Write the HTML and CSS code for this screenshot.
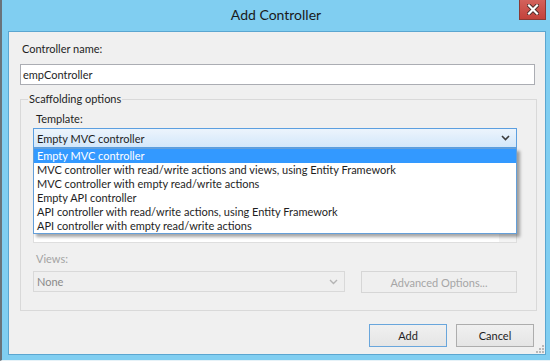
FILE: index.html
```html
<!DOCTYPE html>
<html lang="en">
<head>
    <meta charset="UTF-8">
    <title>Add Controller</title>
    <link rel="stylesheet" href="styles.css">
</head>
<body>

    <div class="window">
        <!-- Title bar -->
        <div class="titlebar">
            <span></span>
            <span class="title">Add Controller</span>
            <div class="controls">
                <button class="close-btn" type="button" aria-label="Close">
                    <svg width="12" height="11" viewBox="0 0 12 11">
                        <path d="M2 1.5 L10 9.5 M10 1.5 L2 9.5" stroke="#4a2a28" stroke-width="4" stroke-linecap="square"/>
                        <path d="M2 1.5 L10 9.5 M10 1.5 L2 9.5" stroke="#ffffff" stroke-width="2.2" stroke-linecap="square"/>
                    </svg>
                </button>
            </div>
        </div>

        <!-- Dialog body -->
        <div class="client">
            <label class="field-label name-label" for="controllerName">Controller name:</label>
            <input id="controllerName" class="text-input" type="text" value="empController">

            <fieldset class="group">
                <legend>Scaffolding options</legend>

                <label class="field-label">Template:</label>
                <div class="template-wrap">
                    <div class="combo combo-open">
                        <span>Empty MVC controller</span>
                        <svg class="chevron" width="9" height="6" viewBox="0 0 9 6">
                            <polyline points="1,1 4.5,4.5 8,1" fill="none" stroke="#3c3c3c" stroke-width="1.6"/>
                        </svg>
                    </div>
                    <div class="template-info">
                        <div class="info-scroll">
                            <svg width="7" height="4" viewBox="0 0 7 4">
                                <polyline points="1,0.5 3.5,3 6,0.5" fill="none" stroke="#9a9a9a" stroke-width="1"/>
                            </svg>
                        </div>
                    </div>

                    <!-- Open drop-down list -->
                    <ul class="dropdown">
                        <li class="selected">Empty MVC controller</li>
                        <li>MVC controller with read/write actions and views, using Entity Framework</li>
                        <li>MVC controller with empty read/write actions</li>
                        <li>Empty API controller</li>
                        <li>API controller with read/write actions, using Entity Framework</li>
                        <li>API controller with empty read/write actions</li>
                    </ul>
                </div>

                <label class="field-label disabled">Views:</label>
                <div class="views-row">
                    <div class="combo combo-disabled">
                        <span>None</span>
                        <svg class="chevron" width="9" height="6" viewBox="0 0 9 6">
                            <polyline points="1,1 4.5,4.5 8,1" fill="none" stroke="#b4b4b4" stroke-width="1.4"/>
                        </svg>
                    </div>
                    <button class="btn btn-disabled" type="button">Advanced Options...</button>
                </div>
            </fieldset>

            <div class="actions">
                <button class="btn btn-default" type="button">Add</button>
                <button class="btn" type="button">Cancel</button>
            </div>

            <svg class="grip" width="8" height="8" viewBox="0 0 8 8">
                <rect x="6" y="0" width="2" height="2" fill="#b8b8b8"/>
                <rect x="3" y="3" width="2" height="2" fill="#b8b8b8"/>
                <rect x="6" y="3" width="2" height="2" fill="#b8b8b8"/>
                <rect x="0" y="6" width="2" height="2" fill="#b8b8b8"/>
                <rect x="3" y="6" width="2" height="2" fill="#b8b8b8"/>
                <rect x="6" y="6" width="2" height="2" fill="#b8b8b8"/>
            </svg>
        </div>
    </div>

</body>
</html>
```

FILE: styles.css
```css
/* Basic resets */
* {
    margin: 0;
    padding: 0;
    box-sizing: border-box;
}

body {
    width: 550px;
    height: 361px;
    overflow: hidden;
    font-family: Lato, "Noto Sans", sans-serif;
    font-size: 11px;
    color: #1e1e1e;
    background-color: #80cef1;
}

/* Window frame */
.window {
    display: flex;
    flex-direction: column;
    height: 361px;
    background-color: #80cef1;
    border-left: 2px solid #6a737a;
    border-bottom: 1px solid #e6f2f8;
    padding-bottom: 5px;
}

.titlebar {
    height: 31px;
    display: grid;
    grid-template-columns: 1fr auto 1fr;
    padding: 0 4px 0 4px;
}

.title {
    font-size: 14px;
    line-height: 30px;
    color: #1a1a1a;
}

.controls {
    justify-self: end;
    align-self: start;
}

.close-btn {
    width: 27px;
    height: 20px;
    display: flex;
    align-items: center;
    justify-content: center;
    background: linear-gradient(#d3625c, #c3423b);
    border: 1px solid #8a3a35;
    border-top: none;
}

/* Dialog body */
.client {
    position: relative;
    flex: 1;
    margin: 0 4px 0 6px;
    border: 1px solid #5ba6d0;
    background-color: #f0f0f0;
    padding: 0 9px 0 11px;
}

.field-label {
    display: block;
    line-height: 16px;
    padding-left: 3px;
}

.name-label {
    margin-top: 9px;
    padding-left: 2px;
}

.text-input {
    display: block;
    width: calc(100% - 1px);
    height: 21px;
    margin-top: 7px;
    padding: 0 2px;
    border: 1px solid #abadb3;
    background-color: #fff;
    font: inherit;
    color: #1e1e1e;
    outline: none;
}

/* Scaffolding options group */
.group {
    margin-top: 6px;
    border: 1px solid #d9d9d9;
    padding: 0 19px 17px 12px;
}

.group legend {
    line-height: 16px;
    margin-left: -5px;
    padding: 0 1px;
}

.group .field-label {
    margin-top: 4px;
}

.group .field-label.disabled {
    margin-top: 8px;
    color: #a3a3a3;
}

.template-wrap {
    position: relative;
    margin-top: 1px;
}

.combo {
    display: flex;
    align-items: center;
    justify-content: space-between;
    padding: 0 6px 0 3px;
}

.combo-open {
    height: 20px;
    border: 1px solid #5c9fe0;
    background: linear-gradient(#ecf4fc, #d3e7fa);
}

.template-info {
    height: 95px;
    display: flex;
    justify-content: flex-end;
    align-items: flex-end;
    background-color: #fff;
    border: 1px solid #dedede;
    border-top: none;
}

.info-scroll {
    width: 17px;
    height: 20px;
    display: flex;
    justify-content: center;
    align-items: flex-start;
    padding-top: 2px;
    background-color: #f4f4f4;
}

.dropdown {
    position: absolute;
    top: 20px;
    left: 0;
    right: 0;
    list-style: none;
    background-color: #fff;
    border: 1px solid #649fd9;
    box-shadow: 3px 3px 3px rgba(0, 0, 0, 0.35);
}

.dropdown li {
    line-height: 14px;
    height: 14px;
    padding-left: 3px;
    white-space: nowrap;
}

.dropdown li.selected {
    background-color: #3399ff;
    color: #fff;
}

.views-row {
    display: flex;
    gap: 16px;
    margin-top: 4px;
    align-items: flex-start;
}

.combo-disabled {
    width: 312px;
    height: 21px;
    border: 1px solid #d9d9d9;
    background-color: #efefef;
    color: #8a8a8a;
}

/* Buttons */
.btn {
    height: 23px;
    font: inherit;
    color: #1e1e1e;
    border: 1px solid #adadad;
    background: linear-gradient(#f0f0f0, #e5e5e5);
}

.btn-disabled {
    width: 156px;
    height: 22px;
    color: #a6a6a6;
    border-color: #d6d6d6;
    background: #efefef;
}

.btn-default {
    border-color: #69a6dc;
}

.actions {
    display: flex;
    justify-content: flex-end;
    gap: 9px;
    margin-top: 13px;
    margin-right: 2px;
}

.actions .btn {
    width: 78px;
}

.grip {
    position: absolute;
    right: 1px;
    bottom: 1px;
}
```
